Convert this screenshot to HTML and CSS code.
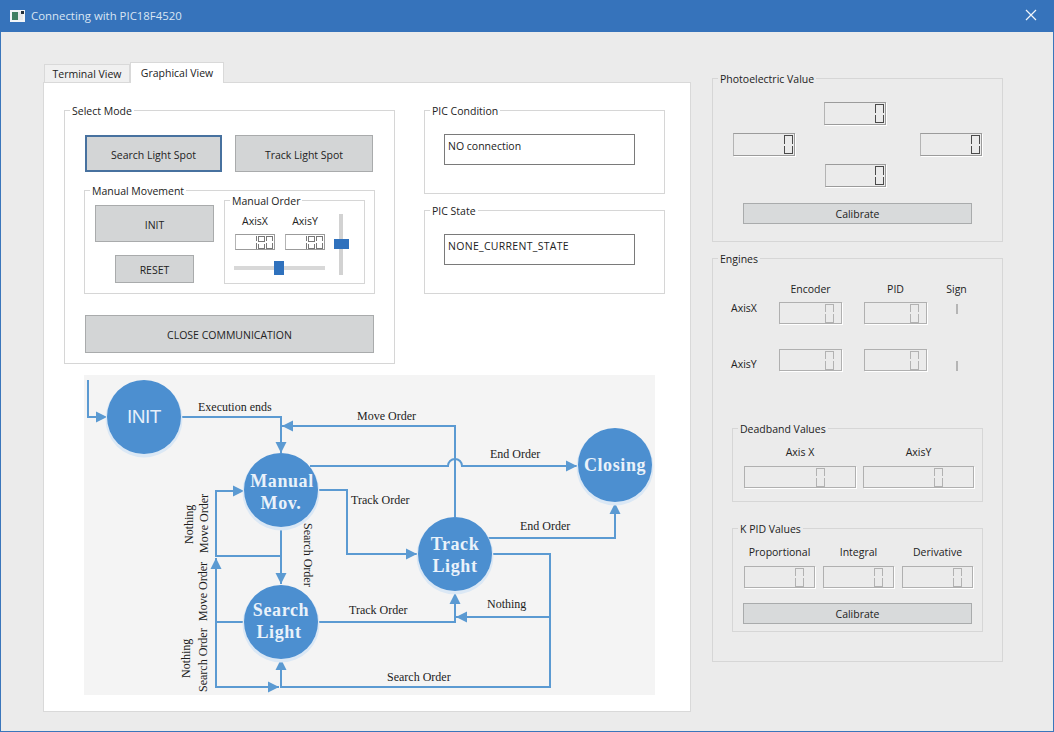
FILE: index.html
```html
<!DOCTYPE html>
<html lang="en">
<head>
    <meta charset="UTF-8">
    <meta name="viewport" content="width=device-width, initial-scale=1.0">
    <title>Connecting with PIC18F4520</title>
    <link rel="stylesheet" href="styles.css">
</head>
<body>
    <div class="window">
        <div class="titlebar">
            <svg class="app-icon" width="15" height="12" viewBox="0 0 15 12">
                <rect x="0" y="0" width="15" height="12" fill="#f2f5f8"/>
                <rect x="2" y="2" width="6" height="8" fill="#3f7f63"/>
                <rect x="8" y="2" width="5" height="8" fill="#e6e9ec"/>
                <rect x="11" y="1" width="3" height="3" fill="#22303c"/>
            </svg>
            <span class="title-text">Connecting with PIC18F4520</span>
            <svg class="close-icon" width="12" height="12" viewBox="0 0 12 12">
                <path d="M1 1 L11 11 M11 1 L1 11"/>
            </svg>
        </div>

        <div class="content">
            <div class="tabs">
                <div class="tab-bar">
                    <div class="tab">Terminal View</div>
                    <div class="tab tab-active">Graphical View</div>
                </div>
                <div class="tab-pane">
                    <div class="top-row">
                        <fieldset class="group select-mode">
                            <legend>Select Mode</legend>
                            <div class="mode-buttons">
                                <button class="btn btn-focus search-btn">Search Light Spot</button>
                                <button class="btn track-btn">Track Light Spot</button>
                            </div>
                            <fieldset class="group manual-movement">
                                <legend>Manual Movement</legend>
                                <div class="manual-row">
                                    <div class="manual-buttons">
                                        <button class="btn init-btn">INIT</button>
                                        <button class="btn reset-btn">RESET</button>
                                    </div>
                                    <fieldset class="group manual-order">
                                        <legend>Manual Order</legend>
                                        <div class="order-grid">
                                            <div class="order-label">AxisX</div>
                                            <div class="order-label">AxisY</div>
                                            <div class="vslider"><span class="vhandle"></span></div>
                                            <div class="lcd lcd-small"><span class="digit d1" aria-label="1"></span><span class="digit d8" aria-label="8"></span><span class="digit d0" aria-label="0"></span></div>
                                            <div class="lcd lcd-small"><span class="digit d1" aria-label="1"></span><span class="digit d8" aria-label="8"></span><span class="digit d0" aria-label="0"></span></div>
                                            <div class="hslider"><span class="hhandle"></span></div>
                                        </div>
                                    </fieldset>
                                </div>
                            </fieldset>
                            <button class="btn close-btn">CLOSE COMMUNICATION</button>
                        </fieldset>

                        <div class="pic-column">
                            <fieldset class="group pic-group">
                                <legend>PIC Condition</legend>
                                <div class="text-box">NO connection</div>
                            </fieldset>
                            <fieldset class="group pic-group">
                                <legend>PIC State</legend>
                                <div class="text-box state-box">NONE_CURRENT_STATE</div>
                            </fieldset>
                        </div>
                    </div>

                    <svg class="diagram" width="571" height="320" viewBox="84 375 571 320">
                        <defs>
                            <marker id="arrow" markerUnits="userSpaceOnUse" markerWidth="12" markerHeight="12" refX="11" refY="6" orient="auto">
                                <path class="arrow-head" d="M0 0.5 L11 6 L0 11.5 Z"/>
                            </marker>
                        </defs>

                        <path class="link" d="M88 380 V417 H107" marker-end="url(#arrow)"/>
                        <path class="link" d="M181 417 H281 V453" marker-end="url(#arrow)"/>
                        <path class="link" d="M455 517 V426 H282" marker-end="url(#arrow)"/>
                        <path class="link" d="M310 466 H448 A7 7 0 0 1 462 466 H577" marker-end="url(#arrow)"/>
                        <path class="link" d="M318 490 H347 V554 H417" marker-end="url(#arrow)"/>
                        <path class="link" d="M281 527 V584" marker-end="url(#arrow)"/>
                        <path class="link" d="M281 556 H216 V491 H244" marker-end="url(#arrow)"/>
                        <path class="link" d="M244 622 H216 V558" marker-end="url(#arrow)"/>
                        <path class="link" d="M216 622 V687 H279" marker-end="url(#arrow)"/>
                        <path class="link" d="M493 554 H550 V687 H281 V659" marker-end="url(#arrow)"/>
                        <path class="link" d="M550 617 H456" marker-end="url(#arrow)"/>
                        <path class="link" d="M318 622 H455 V593" marker-end="url(#arrow)"/>
                        <path class="link" d="M488 538 H615 V503" marker-end="url(#arrow)"/>

                        <circle class="halo" cx="144" cy="419" r="38.5"/>
                        <circle class="state" cx="144" cy="417" r="37"/>
                        <circle class="halo" cx="281" cy="492" r="38.5"/>
                        <circle class="state" cx="281" cy="490" r="37"/>
                        <circle class="halo" cx="281" cy="624" r="38.5"/>
                        <circle class="state" cx="281" cy="622" r="37"/>
                        <circle class="halo" cx="455" cy="556" r="38.5"/>
                        <circle class="state" cx="455" cy="554" r="37"/>
                        <circle class="halo" cx="615" cy="467" r="38.5"/>
                        <circle class="state" cx="615" cy="465" r="37"/>

                        <text class="state-plain" x="144" y="423">INIT</text>
                        <text class="state-name" x="282" y="487">Manual</text>
                        <text class="state-name" x="281" y="509">Mov.</text>
                        <text class="state-name" x="281" y="616">Search</text>
                        <text class="state-name" x="279" y="638">Light</text>
                        <text class="state-name" x="455" y="550">Track</text>
                        <text class="state-name" x="455" y="572">Light</text>
                        <text class="state-name" x="615" y="471">Closing</text>

                        <text class="edge" x="198" y="411">Execution ends</text>
                        <text class="edge" x="357" y="420">Move Order</text>
                        <text class="edge" x="490" y="458">End Order</text>
                        <text class="edge" x="351" y="504">Track Order</text>
                        <text class="edge" x="520" y="530">End Order</text>
                        <text class="edge" x="487" y="608">Nothing</text>
                        <text class="edge" x="349" y="614">Track Order</text>
                        <text class="edge" x="387" y="681">Search Order</text>
                        <text class="edge" transform="translate(304 523) rotate(90)">Search Order</text>
                        <text class="edge" transform="translate(193 544) rotate(-90)">Nothing</text>
                        <text class="edge" transform="translate(208 553) rotate(-90)">Move Order</text>
                        <text class="edge" transform="translate(207 621) rotate(-90)">Move Order</text>
                        <text class="edge" transform="translate(190 678) rotate(-90)">Nothing</text>
                        <text class="edge" transform="translate(207 692) rotate(-90)">Search Order</text>
                    </svg>
                </div>
            </div>

            <div class="side-column">
                <fieldset class="group photo-group">
                    <legend>Photoelectric Value</legend>
                    <div class="photo-grid">
                        <div class="lcd lcd-top"><span class="digit d0" aria-label="0"></span></div>
                        <div class="lcd lcd-left"><span class="digit d0" aria-label="0"></span></div>
                        <div class="lcd lcd-right"><span class="digit d0" aria-label="0"></span></div>
                        <div class="lcd lcd-bottom"><span class="digit d0" aria-label="0"></span></div>
                    </div>
                    <button class="btn calibrate-btn photo-calibrate">Calibrate</button>
                </fieldset>

                <fieldset class="group engines-group">
                    <legend>Engines</legend>
                    <div class="engine-grid">
                        <div></div>
                        <div class="col-head">Encoder</div>
                        <div class="col-head">PID</div>
                        <div class="col-head">Sign</div>

                        <div class="axis-label axis-x">AxisX</div>
                        <div class="lcd lcd-off pad-8"><span class="digit d0" aria-label="0"></span></div>
                        <div class="lcd lcd-off pad-8"><span class="digit d0" aria-label="0"></span></div>
                        <div class="sign sign-x"></div>

                        <div class="axis-label axis-y">AxisY</div>
                        <div class="lcd lcd-off pad-8"><span class="digit d0" aria-label="0"></span></div>
                        <div class="lcd lcd-off pad-8"><span class="digit d0" aria-label="0"></span></div>
                        <div class="sign sign-y"></div>
                    </div>

                    <fieldset class="group sub-group deadband">
                        <legend>Deadband Values</legend>
                        <div class="deadband-grid">
                            <div class="col-head">Axis X</div>
                            <div class="col-head">AxisY</div>
                            <div class="lcd lcd-off pad-31"><span class="digit d0" aria-label="0"></span></div>
                            <div class="lcd lcd-off pad-31"><span class="digit d0" aria-label="0"></span></div>
                        </div>
                    </fieldset>

                    <fieldset class="group sub-group kpid">
                        <legend>K PID Values</legend>
                        <div class="kpid-grid">
                            <div class="col-head">Proportional</div>
                            <div class="col-head">Integral</div>
                            <div class="col-head">Derivative</div>
                            <div class="lcd lcd-off pad-11"><span class="digit d0" aria-label="0"></span></div>
                            <div class="lcd lcd-off pad-11"><span class="digit d0" aria-label="0"></span></div>
                            <div class="lcd lcd-off pad-11"><span class="digit d0" aria-label="0"></span></div>
                        </div>
                        <button class="btn calibrate-btn kpid-calibrate">Calibrate</button>
                    </fieldset>
                </fieldset>
            </div>
        </div>
    </div>
</body>
</html>
```

FILE: styles.css
```css
* {
    box-sizing: border-box;
}

html, body {
    margin: 0;
    padding: 0;
    overflow: hidden;
}

body {
    font-family: "Open Sans", "Noto Sans", sans-serif;
    font-size: 10.5px;
    line-height: 16px;
    color: #222;
}

.window {
    width: 1054px;
    height: 732px;
    display: flex;
    flex-direction: column;
    background-color: #ebebeb;
    border: 1px solid #3a76bb;
    border-top: none;
}

/* title bar */
.titlebar {
    height: 32px;
    flex: none;
    margin: 0 -1px;
    padding: 0 17px 0 10px;
    display: flex;
    align-items: center;
    background-color: #3673bb;
    color: #d9e5f3;
    font-size: 11.4px;
}

.app-icon {
    margin-right: 6px;
    margin-top: -1px;
}

.close-icon {
    margin-left: auto;
    margin-top: -2px;
}

.close-icon path {
    stroke: #f2f6fb;
    stroke-width: 1.2;
    fill: none;
}

.content {
    display: flex;
    padding: 30px 0 0 42px;
}

/* tabs */
.tabs {
    width: 648px;
    flex: none;
}

.tab-bar {
    height: 20px;
    display: flex;
    align-items: flex-end;
    padding-left: 1px;
}

.tab {
    height: 18px;
    width: 86px;
    background-color: #f0f0f0;
    border: 1px solid #d9d9d9;
    border-bottom: none;
    text-align: center;
    line-height: 18px;
}

.tab-active {
    height: 21px;
    width: 94px;
    margin-bottom: -1px;
    position: relative;
    background-color: #fff;
    line-height: 21px;
}

.tab-pane {
    height: 630px;
    padding: 19px 0 0 20px;
    background-color: #fff;
    border: 1px solid #d9d9d9;
}

.top-row {
    display: flex;
    gap: 29px;
}

/* group boxes */
.group {
    margin: 0;
    padding: 0;
    min-width: 0;
    border: 1px solid #d6d6d6;
}

.group legend {
    margin-left: 5px;
    padding: 2px 2px 0;
    line-height: 14px;
}

.select-mode {
    width: 331px;
    height: 262px;
    flex: none;
}

.mode-buttons {
    display: flex;
    gap: 13px;
    margin: 17px 0 0 20px;
}

.manual-movement {
    width: 291px;
    height: 112px;
    margin: 10px 0 0 19px;
}

.manual-row {
    display: flex;
}

.manual-buttons {
    width: 119px;
    margin: 7px 0 0 10px;
    display: flex;
    flex-direction: column;
    align-items: center;
    gap: 13px;
}

.manual-order {
    width: 141px;
    height: 92px;
    margin: -6px 0 0 10px;
}

.order-grid {
    display: grid;
    grid-template-columns: 40px 40px 15px;
    grid-template-rows: 16px 16px 16px;
    column-gap: 10px;
    row-gap: 5px;
    padding: 5px 0 0 10px;
}

.order-label {
    text-align: center;
}

/* sliders */
.vslider {
    grid-row: 1 / span 3;
    grid-column: 3;
    width: 4px;
    height: 61px;
    margin: 1px 0 0 4px;
    position: relative;
    background-color: #d2d2d2;
}

.vhandle {
    position: absolute;
    left: -5px;
    top: 25px;
    width: 15px;
    height: 10px;
    background-color: #2f71bd;
}

.hslider {
    grid-column: 1 / span 2;
    width: 91px;
    height: 4px;
    margin: 11px 0 0 -1px;
    position: relative;
    background-color: #d8d8d8;
}

.hhandle {
    position: absolute;
    left: 40px;
    top: -5px;
    width: 10px;
    height: 14px;
    background-color: #2f71bd;
}

/* buttons */
.btn {
    padding: 2px 0 0;
    font-family: inherit;
    font-size: inherit;
    color: #222;
    background-color: #d3d5d6;
    border: 1px solid #a9abac;
    border-radius: 0;
}

.btn-focus {
    border: 2px solid #47719f;
}

.search-btn {
    width: 137px;
    height: 37px;
}

.track-btn {
    width: 138px;
    height: 37px;
}

.init-btn {
    width: 119px;
    height: 37px;
}

.reset-btn {
    width: 79px;
    height: 28px;
}

.close-btn {
    width: 289px;
    height: 38px;
    margin: 21px 0 0 20px;
}

.calibrate-btn {
    width: 229px;
    height: 21px;
    padding-top: 1px;
    background-color: #d8dadb;
}

/* PIC condition and state */
.pic-column {
    display: flex;
    flex-direction: column;
    gap: 8px;
}

.pic-group {
    width: 241px;
    height: 92px;
}

.text-box {
    width: 191px;
    height: 31px;
    margin: 16px 0 0 19px;
    padding: 3px;
    background-color: #fff;
    border: 1px solid #7a7a7a;
}

.state-box {
    letter-spacing: 0.3px;
}

.diagram {
    display: block;
    margin: 11px 0 0 20px;
    background-color: #f4f4f4;
}

.link {
    fill: none;
    stroke: #5b9ad2;
    stroke-width: 2;
}

.arrow-head {
    fill: #5b9ad2;
}

.state {
    fill: #4c8fd0;
}

.halo {
    fill: #dbe8f5;
}

.state-plain {
    font-family: "Liberation Sans", sans-serif;
    font-size: 19px;
    letter-spacing: -0.5px;
    fill: #e6f0fa;
    text-anchor: middle;
}

.state-name {
    font-family: "Liberation Serif", serif;
    font-weight: bold;
    font-size: 18px;
    letter-spacing: 0.6px;
    fill: #eaf2fa;
    text-anchor: middle;
}

.edge {
    font-family: "Liberation Serif", serif;
    font-size: 12px;
    fill: #1c1c1c;
}

/* right column */
.side-column {
    width: 291px;
    margin: 8px 0 0 21px;
    display: flex;
    flex-direction: column;
    gap: 8px;
}

.photo-group {
    height: 172px;
}

.photo-grid {
    display: grid;
    grid-template-columns: 62px 29px 62px 34px 62px;
    grid-template-rows: 23px 23px 23px;
    row-gap: 8px;
    margin: 16px 0 0 20px;
}

.lcd-top {
    grid-column: 3;
    grid-row: 1;
}

.lcd-left {
    grid-column: 1;
    grid-row: 2;
}

.lcd-right {
    grid-column: 5;
    grid-row: 2;
}

.lcd-bottom {
    grid-column: 3;
    grid-row: 3;
    margin-left: 1px;
}

.photo-calibrate {
    display: block;
    margin: 16px 0 0 30px;
}

/* lcd number boxes */
.lcd {
    display: flex;
    justify-content: flex-end;
    align-items: center;
    gap: 1px;
    padding-right: 1px;
    color: #4a4a4a;
    border: 1px solid #9b9b9b;
    border-left-color: #b4b4b4;
    box-shadow: 1px 1px 0 #fff;
}

.lcd-small {
    height: 16px;
    background-color: #fff;
    padding-right: 1px;
    color: #777;
}

.lcd-off {
    height: 22px;
    color: #b2b2b2;
    border-color: #b0b0b0;
}

.pad-8 {
    padding-right: 7px;
}

.pad-11 {
    padding-right: 10px;
}

.pad-31 {
    padding-right: 30px;
}

.digit {
    width: 9px;
    height: 19px;
    display: flex;
    flex-direction: column;
    gap: 2px;
}

.lcd-small .digit {
    width: 7px;
    height: 13px;
}

.digit::before, .digit::after {
    content: "";
    flex: 1;
    border-left: 1px solid currentColor;
    border-right: 1px solid currentColor;
}

.digit::before {
    border-top: 1px solid currentColor;
}

.digit::after {
    border-bottom: 1px solid currentColor;
}

.d1::before, .d1::after {
    border-left: none;
    border-top: none;
    border-bottom: none;
}

.d8::before {
    border-bottom: 1px solid currentColor;
}

/* engines */
.engines-group {
    height: 412px;
}

.engine-grid {
    display: grid;
    grid-template-columns: 26px 63px 63px 15px;
    grid-template-rows: 16px 22px 22px;
    column-gap: 22px;
    row-gap: 5px;
    margin: 15px 0 0 18px;
}

.engine-grid > .lcd:nth-child(n+10) {
    margin-top: 20px;
}

.col-head {
    justify-self: center;
    text-align: center;
    white-space: nowrap;
}

.axis-label {
    white-space: nowrap;
}

.axis-x {
    margin-top: -2px;
}

.axis-y {
    margin-top: 27px;
}

.sign {
    width: 2px;
    height: 10px;
    justify-self: center;
    background-color: #b5b5b5;
}

.sign-x {
    margin-top: 2px;
}

.sign-y {
    margin-top: 32px;
}

.sub-group {
    width: 251px;
    margin-left: 19px;
}

.deadband {
    height: 82px;
    margin-top: 69px;
}

.deadband-grid {
    display: grid;
    grid-template-columns: 112px 111px;
    grid-template-rows: 16px 22px;
    column-gap: 7px;
    row-gap: 6px;
    margin: 8px 0 0 11px;
}

.kpid {
    height: 112px;
    margin-top: 18px;
}

.kpid-grid {
    display: grid;
    grid-template-columns: 71px 71px 71px;
    grid-template-rows: 16px 22px;
    column-gap: 8px;
    row-gap: 6px;
    margin: 8px 0 0 11px;
}

.kpid-calibrate {
    display: block;
    margin: 15px 0 0 10px;
}
```
